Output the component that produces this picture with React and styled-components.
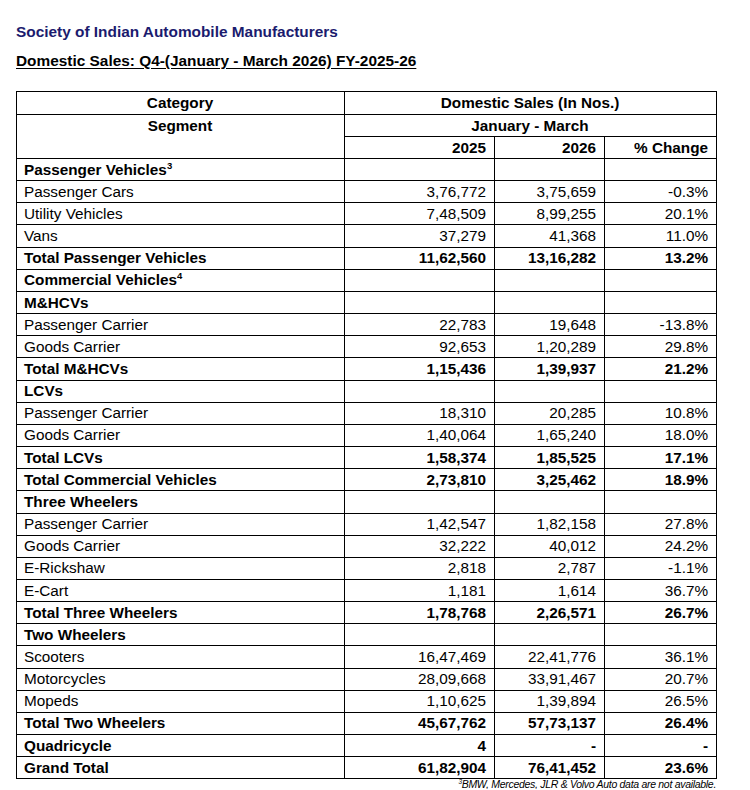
import React from "react";
import styled, { createGlobalStyle } from "styled-components";

const GlobalStyle = createGlobalStyle`
  body {
    margin: 0;
    background: #ffffff;
    font-family: "Liberation Sans", Arial, sans-serif;
    color: #000;
  }
`;

const Page = styled.div`
  width: 750px;
  padding: 22px 0 0 16px;
  box-sizing: border-box;
`;

const OrgTitle = styled.h1`
  margin: 0;
  font-size: 15.4px;
  font-weight: bold;
  color: #1b1b6e;
  line-height: 20px;
`;

const SalesTitle = styled.h2`
  margin: 9px 0 0;
  font-size: 15.4px;
  font-weight: bold;
  line-height: 20px;
  text-decoration: underline;
  text-underline-offset: 2px;
  color: #000;
`;

const Table = styled.table`
  margin-top: 20px;
  width: 700px;
  border-collapse: collapse;
  table-layout: fixed;
  border: 1.5px solid #000;
  font-size: 15.3px;
`;

const Row = styled.tr`
  height: ${({ $h }) => $h || 22.16}px;
`;

const Cell = styled.td`
  border: 1px solid #000;
  padding: 0 8px 0 7px;
  line-height: 18px;
  white-space: nowrap;
  vertical-align: ${({ $top }) => ($top ? "top" : "middle")};
  text-align: ${({ $align }) => $align || "left"};
  font-weight: ${({ $bold }) => ($bold ? "bold" : "normal")};
  ${({ $top }) => $top && "padding-top: 2px;"}
`;

const Sup = styled.sup`
  font-size: 9.5px;
  vertical-align: 6px;
  line-height: 0;
`;

const Footnote = styled.p`
  margin: 0;
  width: 700px;
  text-align: right;
  font-size: 10.5px;
  font-style: italic;
  letter-spacing: -0.3px;
  line-height: 10px;
`;

const FootSup = styled.sup`
  font-size: 6.5px;
  vertical-align: 4px;
  line-height: 0;
`;

const rows = [
  { label: "Passenger Vehicles", sup: "3", kind: "section" },
  { label: "Passenger Cars", v: ["3,76,772", "3,75,659", "-0.3%"] },
  { label: "Utility Vehicles", v: ["7,48,509", "8,99,255", "20.1%"] },
  { label: "Vans", v: ["37,279", "41,368", "11.0%"] },
  { label: "Total Passenger Vehicles", kind: "total", v: ["11,62,560", "13,16,282", "13.2%"] },
  { label: "Commercial Vehicles", sup: "4", kind: "section" },
  { label: "M&HCVs", kind: "section" },
  { label: "Passenger Carrier", v: ["22,783", "19,648", "-13.8%"] },
  { label: "Goods Carrier", v: ["92,653", "1,20,289", "29.8%"] },
  { label: "Total M&HCVs", kind: "total", v: ["1,15,436", "1,39,937", "21.2%"] },
  { label: "LCVs", kind: "section" },
  { label: "Passenger Carrier", v: ["18,310", "20,285", "10.8%"] },
  { label: "Goods Carrier", v: ["1,40,064", "1,65,240", "18.0%"] },
  { label: "Total LCVs", kind: "total", v: ["1,58,374", "1,85,525", "17.1%"] },
  { label: "Total Commercial Vehicles", kind: "total", v: ["2,73,810", "3,25,462", "18.9%"] },
  { label: "Three Wheelers", kind: "section" },
  { label: "Passenger Carrier", v: ["1,42,547", "1,82,158", "27.8%"] },
  { label: "Goods Carrier", v: ["32,222", "40,012", "24.2%"] },
  { label: "E-Rickshaw", v: ["2,818", "2,787", "-1.1%"] },
  { label: "E-Cart", v: ["1,181", "1,614", "36.7%"] },
  { label: "Total Three Wheelers", kind: "total", v: ["1,78,768", "2,26,571", "26.7%"] },
  { label: "Two Wheelers", kind: "section" },
  { label: "Scooters", v: ["16,47,469", "22,41,776", "36.1%"] },
  { label: "Motorcycles", v: ["28,09,668", "33,91,467", "20.7%"] },
  { label: "Mopeds", v: ["1,10,625", "1,39,894", "26.5%"] },
  { label: "Total Two Wheelers", kind: "total", v: ["45,67,762", "57,73,137", "26.4%"] },
  { label: "Quadricycle", kind: "total", v: ["4", "-", "-"] },
  { label: "Grand Total", kind: "total", v: ["61,82,904", "76,41,452", "23.6%"] },
];

export default function App() {
  return (
    <>
      <GlobalStyle />
      <Page>
        <OrgTitle>Society of Indian Automobile Manufacturers</OrgTitle>
        <SalesTitle>Domestic Sales: Q4-(January - March 2026) FY-2025-26</SalesTitle>
        <Table>
          <colgroup>
            <col style={{ width: 328 }} />
            <col style={{ width: 150 }} />
            <col style={{ width: 110 }} />
            <col style={{ width: 112 }} />
          </colgroup>
          <thead>
            <Row $h={23}>
              <Cell $bold $align="center">Category</Cell>
              <Cell $bold $align="center" colSpan={3}>Domestic Sales (In Nos.)</Cell>
            </Row>
            <Row $h={22}>
              <Cell $bold $align="center" $top rowSpan={2}>Segment</Cell>
              <Cell $bold $align="center" colSpan={3}>January - March</Cell>
            </Row>
            <Row $h={22}>
              <Cell $bold $align="right">2025</Cell>
              <Cell $bold $align="right">2026</Cell>
              <Cell $bold $align="right">% Change</Cell>
            </Row>
          </thead>
          <tbody>
            {rows.map((r, i) => {
              const bold = r.kind === "section" || r.kind === "total";
              const vals = r.v || ["", "", ""];
              return (
                <Row key={i}>
                  <Cell $bold={bold}>
                    {r.label}
                    {r.sup && <Sup>{r.sup}</Sup>}
                  </Cell>
                  {vals.map((val, j) => (
                    <Cell key={j} $bold={bold} $align="right">{val}</Cell>
                  ))}
                </Row>
              );
            })}
          </tbody>
        </Table>
        <Footnote>
          <FootSup>3</FootSup>BMW, Mercedes, JLR &amp; Volvo Auto data are not available.
        </Footnote>
      </Page>
    </>
  );
}
